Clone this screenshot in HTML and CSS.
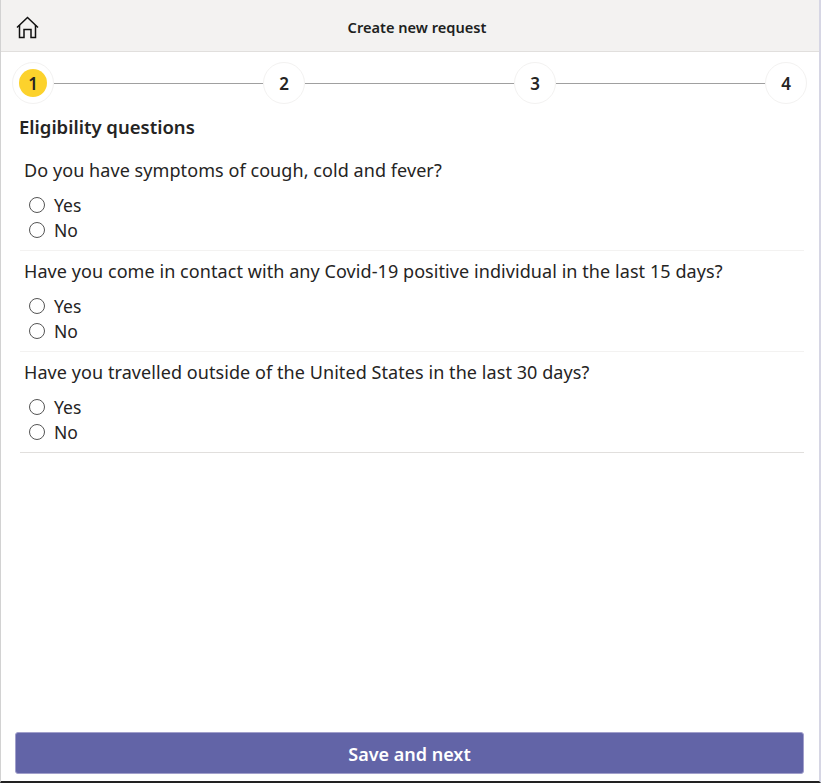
FILE: index.html
```html
<!DOCTYPE html>
<html lang="en">
<head>
    <meta charset="UTF-8">
    <meta name="viewport" content="width=device-width, initial-scale=1.0">
    <title>Create new request</title>
    <link rel="stylesheet" href="styles.css">
</head>
<body>
    <div class="page">
        <header class="top-bar">
            <svg class="home-icon" width="24" height="23" viewBox="0 0 24 23" fill="none" stroke="#111" stroke-width="1.5">
                <path d="M1 11.500 L11.500 1.500 L22 11.500"/>
                <path d="M3.500 9 V21.500 H8 V13.500 H15 V21.500 H19.500 V9"/>
            </svg>
            <div class="top-title">Create new request</div>
        </header>
        <main class="content">
            <div class="stepper">
                <div class="step step-active"><span class="step-num">1</span></div>
                <div class="step-line"></div>
                <div class="step"><span class="step-num">2</span></div>
                <div class="step-line"></div>
                <div class="step"><span class="step-num">3</span></div>
                <div class="step-line"></div>
                <div class="step"><span class="step-num">4</span></div>
            </div>
            <h2 class="section-title">Eligibility questions</h2>
            <div class="question">
                <div class="question-text">Do you have symptoms of cough, cold and fever?</div>
                <label class="option"><span class="radio"></span>Yes</label>
                <label class="option"><span class="radio"></span>No</label>
            </div>
            <div class="question">
                <div class="question-text">Have you come in contact with any Covid-19 positive individual in the last 15 days?</div>
                <label class="option"><span class="radio"></span>Yes</label>
                <label class="option"><span class="radio"></span>No</label>
            </div>
            <div class="question question-last">
                <div class="question-text">Have you travelled outside of the United States in the last 30 days?</div>
                <label class="option"><span class="radio"></span>Yes</label>
                <label class="option"><span class="radio"></span>No</label>
            </div>
        </main>
        <footer class="bottom-bar">
            <button class="save-btn" type="button">Save and next</button>
        </footer>
    </div>
</body>
</html>
```
FILE: styles.css
```css
html, body {
    height: 100%;
}

body {
    margin: 0;
    font-family: "Noto Sans", sans-serif;
    color: #252423;
    background-color: #fff;
    overflow: hidden;
}

.page {
    display: flex;
    flex-direction: column;
    height: 781px;
    border-left: 1px solid #d2d2d2;
    border-right: 2px solid #d6d6e4;
    border-bottom: 2px solid #222;
}

.top-bar {
    display: flex;
    align-items: center;
    height: 47px;
    padding: 4px 0 0 15px;
    background-color: #f3f2f1;
    border-bottom: 1px solid #e1dfdd;
}

.top-title {
    flex: 1;
    margin: -2px 25px 0 0;
    text-align: center;
    font-size: 14.6px;
    font-weight: 600;
    color: #201f1e;
}

.content {
    flex: 1;
    padding: 10px 15px 0 19px;
}

.stepper {
    display: flex;
    align-items: center;
    margin-left: -8px;
    margin-right: -3px;
}

.step {
    display: flex;
    justify-content: center;
    align-items: center;
    width: 40px;
    height: 40px;
    border: 1px solid #f3f2f1;
    border-radius: 50%;
    flex: none;
}

.step-num {
    display: flex;
    justify-content: center;
    align-items: center;
    box-sizing: border-box;
    width: 28px;
    height: 28px;
    padding-top: 1px;
    border-radius: 50%;
    font-size: 17px;
    font-weight: 600;
}

.step-active .step-num {
    background-color: #fcd22c;
}

.step-line {
    flex: 1;
    height: 1px;
    background-color: #a0a0a0;
}

.section-title {
    margin: 10px 0 19px -1px;
    font-size: 18.5px;
    line-height: 25px;
    font-weight: 600;
}

.question {
    padding: 0 0 8px 4px;
    margin-bottom: 8px;
    border-bottom: 1px solid #f3f2f1;
}

.question-last {
    border-bottom-color: #e1dfdd;
}

.question-text {
    font-size: 18px;
    line-height: 25px;
    letter-spacing: 0.07px;
    margin-bottom: 9px;
}

.option {
    display: flex;
    align-items: center;
    height: 25px;
    font-size: 17.5px;
    padding-left: 5px;
}

.radio {
    width: 14px;
    height: 14px;
    margin-right: 9px;
    border: 1px solid #555;
    border-radius: 50%;
}

.bottom-bar {
    padding: 0 15px 7px 14px;
}

.save-btn {
    display: block;
    width: 100%;
    height: 42px;
    padding-top: 3px;
    border: 1px solid #a19fcb;
    border-radius: 3px;
    background-color: #6264a7;
    color: #fff;
    font-family: inherit;
    font-size: 18px;
    font-weight: 600;
}
```
